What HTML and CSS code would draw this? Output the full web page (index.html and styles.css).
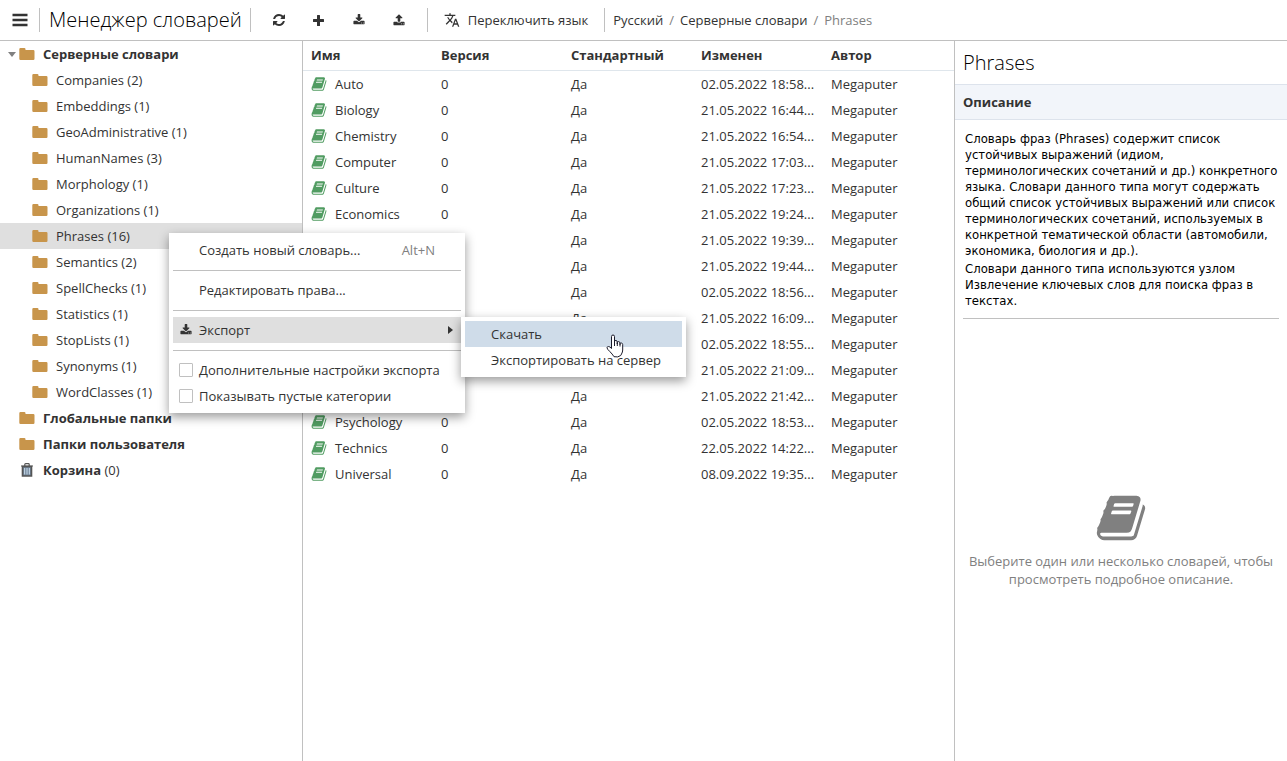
FILE: index.html
```html
<!DOCTYPE html>
<html lang="ru">
<head>
<meta charset="utf-8">
<title>Менеджер словарей</title>
<link rel="stylesheet" href="styles.css">
</head>
<body>
<svg class="sprite" aria-hidden="true">
  <symbol id="i-bars" viewBox="0 0 16 14"><path d="M.5.800h15v2.400H.5zM.5 5.800h15v2.400H.5zM.5 10.800h15v2.400H.5z"/></symbol>
  <symbol id="i-refresh" viewBox="0 0 1536 1536"><path d="M1511 928q0 5-1 7-64 268-268 434.500t-478 166.500q-146 0-282.500-55t-243.500-157l-129 129q-19 19-45 19t-45-19-19-45v-448q0-26 19-45t45-19h448q26 0 45 19t19 45-19 45l-137 137q71 66 161 102t187 36q134 0 250-65t186-179q11-17 53-117 8-23 30-23h192q13 0 22.500 9.500t9.500 22.500zm25-800v448q0 26-19 45t-45 19h-448q-26 0-45-19t-19-45 19-45l138-138q-148-137-349-137-134 0-250 65t-186 179q-11 17-53 117-8 23-30 23h-199q-13 0-22.500-9.500t-9.500-22.500v-7q65-268 270-434.500t480-166.500q146 0 284 55.500t245 156.500l130-129q19-19 45-19t45 19 19 45z"/></symbol>
  <symbol id="i-plus" viewBox="0 0 11 11"><path d="M4.600 0h1.800q.6 0 .6.600V4h3.400q.6 0 .6.600v1.800q0 .6-.6.600H7v3.400q0 .6-.6.600H4.600q-.6 0-.6-.6V7H.6Q0 7 0 6.400V4.600Q0 4 .6 4H4V.6Q4 0 4.600 0z"/></symbol>
  <symbol id="i-download" viewBox="0 0 1792 1792"><path d="M1344 1344q0-26-19-45t-45-19-45 19-19 45 19 45 45 19 45-19 19-45zm256 0q0-26-19-45t-45-19-45 19-19 45 19 45 45 19 45-19 19-45zm128-224v320q0 40-28 68t-68 28h-1472q-40 0-68-28t-28-68v-320q0-40 28-68t68-28h465l135 136q58 56 136 56t136-56l136-136h464q40 0 68 28t28 68zm-325-569q17 41-14 70l-448 448q-18 19-45 19t-45-19l-448-448q-31-29-14-70 17-39 59-39h256v-448q0-26 19-45t45-19h256q26 0 45 19t19 45v448h256q42 0 59 39z"/></symbol>
  <symbol id="i-upload" viewBox="0 0 1792 1792"><path d="M1344 1472q0-26-19-45t-45-19-45 19-19 45 19 45 45 19 45-19 19-45zm256 0q0-26-19-45t-45-19-45 19-19 45 19 45 45 19 45-19 19-45zm128-224v320q0 40-28 68t-68 28h-1472q-40 0-68-28t-28-68v-320q0-40 28-68t68-28h427q21 56 70.500 92t110.500 36h256q61 0 110.500-36t70.500-92h427q40 0 68 28t28 68zm-325-648q-17 40-59 40h-256v448q0 26-19 45t-45 19h-256q-26 0-45-19t-19-45v-448h-256q-42 0-59-40-17-39 14-69l448-448q18-19 45-19t45 19l448 448q31 30 14 69z"/></symbol>
  <symbol id="i-translate" viewBox="0 0 24 24"><path d="M12.870 15.070l-2.540-2.510.03-.03c1.740-1.940 2.980-4.170 3.710-6.530H17V4h-7V2H8v2H1v1.990h11.170C11.500 7.920 10.440 9.750 9 11.350 8.070 10.320 7.300 9.190 6.690 8h-2c.73 1.630 1.730 3.170 2.980 4.560l-5.090 5.020L4 19l5-5 3.110 3.110.76-2.040zM18.500 10h-2L12 22h2l1.120-3h4.750L21 22h2l-4.500-12zm-2.620 7l1.620-4.330L19.120 17h-3.240z"/></symbol>
  <symbol id="i-folder" viewBox="0 0 16 12"><path d="M1.500 0h3.800q1.200 0 1.200 1.200V2h7.800q1.200 0 1.200 1.200v7.600q0 1.200-1.200 1.200H1.500Q.3 12 .3 10.800V1.200Q.3 0 1.500 0z"/></symbol>
  <symbol id="i-trash" viewBox="0 0 12 14"><path class="trash-bin" d="M1.500 3.500h9V13h-9z"/><path class="trash-bars" d="M3.700 5v6.500M6 5v6.500M8.300 5v6.500"/><path class="trash-lid" d="M0 3h12M3.800 2.800V1.500q0-.8.800-.8h2.800q.8 0 .8.800v1.300"/></symbol>
  <symbol id="i-book" viewBox="0 0 1792 1792"><path d="M1703 478q40 57 18 129l-275 906q-19 64-76.500 107.500t-122.500 43.500h-923q-77 0-148.500-53.500t-99.500-131.500q-24-67-2-127 0-4 3-27t4-37q1-8-3-21.500t-3-19.500q2-11 8-21t16.500-23.500 16.500-23.500q23-38 45-91.500t30-91.500q3-10 .5-30t-.5-28q3-11 17-28t17-23q21-36 42-92t25-90q1-9-2.500-32t.5-28q4-13 22-30.500t22-22.500q19-26 42.500-84.500t27.500-96.500q1-8-3-25.500t-2-26.500q2-8 9-18t18-23 17-21q8-12 16.500-30.500t15-35 16-36 19.500-32 26.500-23.500 36-11.500 47.500 5.500l-1 3q38-9 51-9h761q74 0 114 56t18 130l-274 906q-36 119-71.500 153.500t-128.500 34.500h-869q-27 0-38 15-11 16-1 43 24 70 144 70h923q29 0 56-15.500t35-41.500l300-987q7-22 5-57 38 15 59 43zm-1064 2q-4 13 2 22.500t20 9.500h608q13 0 25.500-9.500t16.500-22.500l21-64q4-13-2-22.500t-20-9.500h-608q-13 0-25.500 9.500t-16.500 22.500zm-83 256q-4 13 2 22.500t20 9.500h608q13 0 25.500-9.500t16.500-22.500l21-64q4-13-2-22.500t-20-9.500h-608q-13 0-25.500 9.500t-16.500 22.500z"/></symbol>
</svg>

<header class="toolbar">
  <button class="tool tool-menu" aria-label="Меню"><svg class="icon-bars"><use href="#i-bars"/></svg></button>
  <h1 class="app-title">Менеджер словарей</h1>
  <div class="tools">
    <button class="tool" aria-label="Обновить"><svg class="icon-12"><use href="#i-refresh"/></svg></button>
    <button class="tool" aria-label="Добавить"><svg class="icon-10"><use href="#i-plus"/></svg></button>
    <button class="tool" aria-label="Импорт"><svg class="icon-12"><use href="#i-download"/></svg></button>
    <button class="tool" aria-label="Экспорт"><svg class="icon-12"><use href="#i-upload"/></svg></button>
  </div>
  <button class="language"><svg class="icon-16"><use href="#i-translate"/></svg>Переключить язык</button>
  <nav class="crumbs" aria-label="Путь">
    <a href="#">Русский</a><span class="slash">/</span><a href="#">Серверные словари</a><span class="slash">/</span><span class="crumb-current">Phrases</span>
  </nav>
</header>

<main class="workspace">
  <nav class="tree" aria-label="Папки">
    <a class="node root" href="#"><span class="arrow"></span><svg class="folder"><use href="#i-folder"/></svg><b>Серверные словари</b></a>
    <a class="node child" href="#"><svg class="folder"><use href="#i-folder"/></svg>Companies (2)</a>
    <a class="node child" href="#"><svg class="folder"><use href="#i-folder"/></svg>Embeddings (1)</a>
    <a class="node child" href="#"><svg class="folder"><use href="#i-folder"/></svg>GeoAdministrative (1)</a>
    <a class="node child" href="#"><svg class="folder"><use href="#i-folder"/></svg>HumanNames (3)</a>
    <a class="node child" href="#"><svg class="folder"><use href="#i-folder"/></svg>Morphology (1)</a>
    <a class="node child" href="#"><svg class="folder"><use href="#i-folder"/></svg>Organizations (1)</a>
    <a class="node child selected" href="#"><svg class="folder"><use href="#i-folder"/></svg>Phrases (16)</a>
    <a class="node child" href="#"><svg class="folder"><use href="#i-folder"/></svg>Semantics (2)</a>
    <a class="node child" href="#"><svg class="folder"><use href="#i-folder"/></svg>SpellChecks (1)</a>
    <a class="node child" href="#"><svg class="folder"><use href="#i-folder"/></svg>Statistics (1)</a>
    <a class="node child" href="#"><svg class="folder"><use href="#i-folder"/></svg>StopLists (1)</a>
    <a class="node child" href="#"><svg class="folder"><use href="#i-folder"/></svg>Synonyms (1)</a>
    <a class="node child" href="#"><svg class="folder"><use href="#i-folder"/></svg>WordClasses (1)</a>
    <a class="node" href="#"><svg class="folder"><use href="#i-folder"/></svg><b>Глобальные папки</b></a>
    <a class="node" href="#"><svg class="folder"><use href="#i-folder"/></svg><b>Папки пользователя</b></a>
    <a class="node" href="#"><svg class="trash"><use href="#i-trash"/></svg><span><b>Корзина</b> (0)</span></a>
  </nav>

  <section class="list">
    <table class="grid">
      <thead><tr><th>Имя</th><th>Версия</th><th>Стандартный</th><th>Изменен</th><th>Автор</th></tr></thead>
      <tbody>
        <tr><td><svg class="book"><use href="#i-book"/></svg>Auto</td><td>0</td><td>Да</td><td>02.05.2022 18:58...</td><td>Megaputer</td></tr>
        <tr><td><svg class="book"><use href="#i-book"/></svg>Biology</td><td>0</td><td>Да</td><td>21.05.2022 16:44...</td><td>Megaputer</td></tr>
        <tr><td><svg class="book"><use href="#i-book"/></svg>Chemistry</td><td>0</td><td>Да</td><td>21.05.2022 16:54...</td><td>Megaputer</td></tr>
        <tr><td><svg class="book"><use href="#i-book"/></svg>Computer</td><td>0</td><td>Да</td><td>21.05.2022 17:03...</td><td>Megaputer</td></tr>
        <tr><td><svg class="book"><use href="#i-book"/></svg>Culture</td><td>0</td><td>Да</td><td>21.05.2022 17:23...</td><td>Megaputer</td></tr>
        <tr><td><svg class="book"><use href="#i-book"/></svg>Economics</td><td>0</td><td>Да</td><td>21.05.2022 19:24...</td><td>Megaputer</td></tr>
        <tr><td></td><td></td><td>Да</td><td>21.05.2022 19:39...</td><td>Megaputer</td></tr>
        <tr><td></td><td></td><td>Да</td><td>21.05.2022 19:44...</td><td>Megaputer</td></tr>
        <tr><td></td><td></td><td>Да</td><td>02.05.2022 18:56...</td><td>Megaputer</td></tr>
        <tr><td></td><td></td><td>Да</td><td>21.05.2022 16:09...</td><td>Megaputer</td></tr>
        <tr><td></td><td></td><td></td><td>02.05.2022 18:55...</td><td>Megaputer</td></tr>
        <tr><td></td><td></td><td></td><td>21.05.2022 21:09...</td><td>Megaputer</td></tr>
        <tr><td></td><td></td><td>Да</td><td>21.05.2022 21:42...</td><td>Megaputer</td></tr>
        <tr><td><svg class="book"><use href="#i-book"/></svg>Psychology</td><td>0</td><td>Да</td><td>02.05.2022 18:53...</td><td>Megaputer</td></tr>
        <tr><td><svg class="book"><use href="#i-book"/></svg>Technics</td><td>0</td><td>Да</td><td>22.05.2022 14:22...</td><td>Megaputer</td></tr>
        <tr><td><svg class="book"><use href="#i-book"/></svg>Universal</td><td>0</td><td>Да</td><td>08.09.2022 19:35...</td><td>Megaputer</td></tr>
      </tbody>
    </table>
  </section>

  <aside class="details">
    <h2 class="details-title">Phrases</h2>
    <h3 class="details-section">Описание</h3>
    <div class="description">
      <p>Словарь фраз (Phrases) содержит список устойчивых выражений (идиом, терминологических сочетаний и др.) конкретного языка. Словари данного типа могут содержать общий список устойчивых выражений или список терминологических сочетаний, используемых в конкретной тематической области (автомобили, экономика, биология и др.).</p>
      <p>Словари данного типа используются узлом Извлечение ключевых слов для поиска фраз в текстах.</p>
    </div>
    <div class="empty">
      <svg class="book-large"><use href="#i-book"/></svg>
      <p>Выберите один или несколько словарей, чтобы просмотреть подробное описание.</p>
    </div>
  </aside>
</main>

<div class="menu context-menu" role="menu">
  <button class="item" role="menuitem"><span class="label">Создать новый словарь...</span><span class="shortcut">Alt+N</span></button>
  <hr class="separator">
  <button class="item" role="menuitem"><span class="label">Редактировать права...</span></button>
  <hr class="separator">
  <button class="item open" role="menuitem"><svg class="icon-12"><use href="#i-download"/></svg><span class="label">Экспорт</span><span class="more"></span></button>
  <hr class="separator">
  <label class="item"><input class="check" type="checkbox"><span class="label">Дополнительные настройки экспорта</span></label>
  <label class="item"><input class="check" type="checkbox"><span class="label">Показывать пустые категории</span></label>
</div>

<div class="menu submenu" role="menu">
  <button class="item active" role="menuitem"><span class="label">Скачать</span></button>
  <button class="item" role="menuitem"><span class="label">Экспортировать на сервер</span></button>
</div>

<svg class="pointer" viewBox="0 0 18 24" aria-hidden="true"><path d="M5.500 14V2.500Q5.500 1 7 1t1.500 1.500V9.500V7.500Q8.600 6.300 10 6.500q1.300.2 1.300 1.500v2V8.400q.2-1 1.400-.8 1.300.2 1.300 1.400v1.500V9.600q.3-.8 1.400-.6 1.300.3 1.300 1.600V16q0 2-1.200 4l-.8 1.500q-2.700 2.200-6.700 1.200-1.700-2.700-4.200-5.200Q1 15 1 13.700q.2-1.200 1.500-1.200t3 2z"/><path class="knuckles" d="M8.500 9v3M11.300 9v3M14 10v2.500"/></svg>
</body>
</html>
```
FILE: styles.css
```css
* {
  box-sizing: border-box;
}

body {
  margin: 0;
  min-height: 100vh;
  display: flex;
  flex-direction: column;
  position: relative;
  font: 13px/18px "Open Sans", sans-serif;
  color: #333;
  background: #fff;
}

h1, h2, h3, p {
  margin: 0;
}

a {
  color: inherit;
  text-decoration: none;
}

button {
  border: 0;
  padding: 0;
  background: none;
  font: inherit;
  color: inherit;
}

svg {
  display: block;
  flex: none;
  fill: currentColor;
}

.sprite {
  position: absolute;
  width: 0;
  height: 0;
}

.icon-bars { width: 16px; height: 14px; }
.icon-10 { width: 11px; height: 11px; }
.icon-12 { width: 12px; height: 12px; }
.icon-16 { width: 16px; height: 16px; }

/* Toolbar */
.toolbar {
  display: flex;
  align-items: center;
  height: 41px;
  border-bottom: 1px solid #c0c0c0;
}

.tool {
  display: flex;
  align-items: center;
  justify-content: center;
  width: 40px;
  height: 24px;
}

.tool-menu {
  border-right: 1px solid #c0c0c0;
}

.app-title {
  height: 24px;
  padding: 0 8px 0 9px;
  border-right: 1px solid #c0c0c0;
  font-size: 20px;
  line-height: 24px;
  font-weight: 300;
  color: #000;
}

.tools {
  display: flex;
  padding: 0 8px;
  border-right: 1px solid #c0c0c0;
}

.language {
  display: flex;
  align-items: center;
  gap: 8px;
  height: 24px;
  padding: 0 16px;
  border-right: 1px solid #c0c0c0;
}

.crumbs {
  display: flex;
  gap: 6px;
  padding-left: 8px;
}

.slash, .crumb-current {
  color: #808080;
}

/* Main columns */
.workspace {
  flex: 1;
  display: grid;
  grid-template-columns: 303px 1fr 333px;
}

.tree {
  border-right: 1px solid #c0c0c0;
}

.node {
  display: flex;
  align-items: center;
  gap: 8px;
  height: 26px;
  padding-left: 19px;
}

.root {
  padding-left: 8px;
  gap: 0;
}

.root .folder {
  margin: 0 8px 0 3px;
}

.child {
  padding-left: 32px;
}

.selected {
  background: #dfdfdf;
}

.arrow {
  border: 4px solid transparent;
  border-top: 5px solid #808080;
  border-bottom: 0;
}

.folder {
  width: 16px;
  height: 12px;
  fill: #c8954b;
}

.trash {
  width: 16px;
  height: 14px;
  fill: none;
  stroke: #555;
}

.trash-bin { stroke-width: 1.6; fill: #6f8296; }
.trash-bars { stroke: #cfe2f2; }
.trash-lid { stroke-width: 1.2; }

/* Dictionary list */
.grid {
  width: 100%;
  table-layout: fixed;
  border-spacing: 0;
}

.grid th, .grid td {
  padding: 0 8px;
  text-align: left;
  white-space: nowrap;
}

.grid th {
  width: 130px;
  height: 30px;
  padding-bottom: 1px;
  border-bottom: 1px solid #dfe6ec;
}

.grid th:last-child {
  width: auto;
}

.grid td {
  height: 26px;
}

.book {
  display: inline-block;
  width: 16px;
  height: 16px;
  margin-right: 8px;
  vertical-align: -3px;
  fill: #519c62;
}

/* Details */
.details {
  display: flex;
  flex-direction: column;
  border-left: 1px solid #c0c0c0;
}

.details-title {
  padding: 8px;
  font-size: 20px;
  line-height: 27px;
  font-weight: 300;
  color: #000;
}

.details-section {
  padding: 8px;
  border: 1px solid #dde3ec;
  border-width: 1px 0;
  background: #f2f5fa;
  font-size: 13px;
  line-height: 18px;
}

.description {
  display: grid;
  gap: 2px;
  margin: 0 8px;
  padding: 11px 0 9px 2px;
  border-bottom: 1px solid #c0c0c0;
  font: 13px/16px "DejaVu Sans Condensed", sans-serif;
  color: #000;
}

.description p {
  margin-right: -4px;
}

.empty {
  flex: 1;
  display: flex;
  flex-direction: column;
  align-items: center;
  justify-content: center;
  gap: 8px;
  padding: 0 8px;
  text-align: center;
  color: #808080;
}

.book-large {
  width: 52px;
  height: 52px;
}

/* Menus */
.menu {
  position: absolute;
  padding: 4px;
  background: #fff;
  box-shadow: 0 4px 10px rgba(0, 0, 0, 0.4);
}

.context-menu {
  left: 169px;
  top: 233px;
  width: 296px;
}

.submenu {
  left: 461px;
  top: 317px;
  width: 225px;
}

.item {
  display: flex;
  align-items: center;
  width: 100%;
  height: 26px;
  position: relative;
  padding: 0 26px;
  text-align: left;
  white-space: nowrap;
}

.item .icon-12 {
  position: absolute;
  left: 7px;
}

.open {
  background: #dfdfdf;
}

.active {
  background: #cfdce9;
}

.shortcut {
  margin-left: auto;
  color: #808080;
}

.more {
  position: absolute;
  right: 8px;
  border: 4px solid transparent;
  border-left: 5px solid #333;
  border-right: 0;
}

.separator {
  height: 1px;
  margin: 7px 0 6px;
  border: 0;
  background: #c0c0c0;
}

.check {
  appearance: none;
  position: absolute;
  left: 6px;
  width: 14px;
  height: 14px;
  margin: 0;
  border: 1px solid #c0c0c0;
  border-radius: 1px;
  background: #fff;
}

.pointer {
  position: absolute;
  left: 606px;
  top: 334px;
  width: 18px;
  height: 24px;
  fill: #fff;
  stroke: #1b1b2b;
}

.knuckles {
  fill: none;
}
```
